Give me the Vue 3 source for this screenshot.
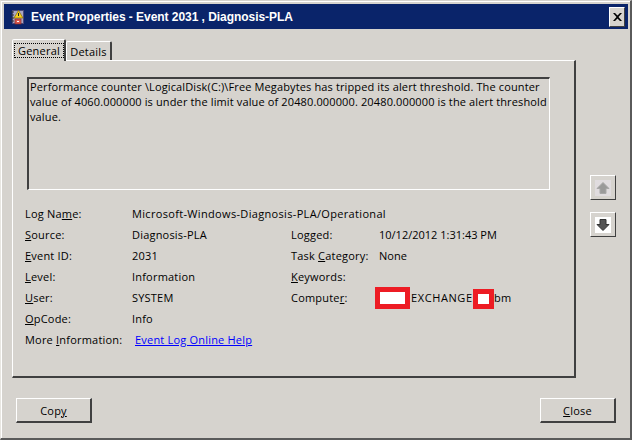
<script setup>
const rows = [
  { label: 'Source:', key: 0, value: 'Diagnosis-PLA', label2: 'Logged:', key2: 3, value2: '10/12/2012 1:31:43 PM' },
  { label: 'Event ID:', key: 0, value: '2031', label2: 'Task Category:', key2: 5, value2: 'None' },
  { label: 'Level:', key: 0, value: 'Information', label2: 'Keywords:', key2: 0, value2: '' },
]
const split = (text, i) => [text.slice(0, i), text[i], text.slice(i + 1)]
</script>

<template>
  <div class="page">
    <div class="window">
      <div class="titlebar">
        <svg class="appicon" width="16" height="16" viewBox="0 0 16 16">
          <rect x="2.500" y="1.500" width="11" height="13" fill="#a9a6c4" stroke="#4b4a7a" />
          <path d="M1 3h3M1 6h3M1 9h3M1 12h3" stroke="#333" />
          <path d="M8.500 1.500 13 9H4z" fill="#f5d020" stroke="#8a6d00" stroke-width=".7" />
          <rect x="8" y="4" width="1" height="3" fill="#222" />
          <rect x="5" y="10" width="6" height="5" fill="#d8584f" stroke="#8c2b25" stroke-width=".7" />
          <rect x="7" y="12" width="2" height="1" fill="#fff" />
        </svg>
        <span class="title">Event Properties - Event 2031 , Diagnosis-PLA</span>
        <button class="closex" aria-label="Close">
          <svg width="9" height="8" viewBox="0 0 9 8"><path d="M0 0h2l2.500 2.500L7 0h2L5.500 4 9 8H7L4.500 5.500 2 8H0l3.500-4z" fill="#000" /></svg>
        </button>
      </div>

      <div class="content">
        <div class="left">
          <div class="tabs">
            <div class="tab active"><span class="focus">General</span></div>
            <div class="tab">Details</div>
          </div>
          <div class="panel">
            <div class="message">Performance counter \LogicalDisk(C:)\Free Megabytes has tripped its alert threshold. The counter value of 4060.000000 is under the limit value of 20480.000000. 20480.000000 is the alert threshold value.</div>
            <div class="fields">
              <div class="row">
                <span class="c1">Log Na<u>m</u>e:</span>
                <span class="logname">Microsoft-Windows-Diagnosis-PLA/Operational</span>
              </div>
              <div v-for="r in rows" :key="r.label" class="row">
                <span class="c1">{{ split(r.label, r.key)[0] }}<u>{{ split(r.label, r.key)[1] }}</u>{{ split(r.label, r.key)[2] }}</span>
                <span class="c2">{{ r.value }}</span>
                <span class="c3">{{ split(r.label2, r.key2)[0] }}<u>{{ split(r.label2, r.key2)[1] }}</u>{{ split(r.label2, r.key2)[2] }}</span>
                <span class="c4">{{ r.value2 }}</span>
              </div>
              <div class="row">
                <span class="c1"><u>U</u>ser:</span>
                <span class="c2">SYSTEM</span>
                <span class="c3">Compute<u>r</u>:</span>
                <span class="computer">
                  <span class="redact wide"></span>
                  <span class="host">EXCHANGE</span>
                  <span class="redact narrow"></span>
                  <span class="tail">bm</span>
                </span>
              </div>
              <div class="row">
                <span class="c1"><u>O</u>pCode:</span>
                <span class="c2">Info</span>
              </div>
              <div class="row">
                <span class="more">More <u>I</u>nformation:</span>
                <a class="link" href="#">Event Log Online Help</a>
              </div>
            </div>
          </div>
        </div>
        <div class="arrows">
          <button class="arrow" aria-label="Previous">
            <span class="face dim">
              <svg width="16" height="16" viewBox="0 0 16 16"><path d="M8 2.500 14 8.500H11V13.500H5V8.500H2z" fill="#9a9a9a" stroke="#a8a8a8" /></svg>
            </span>
          </button>
          <button class="arrow" aria-label="Next">
            <span class="face">
              <svg width="16" height="16" viewBox="0 0 16 16"><path d="M5 2.500H11V7.500H14L8 13.500 2 7.500H5z" fill="#555" stroke="#333" /></svg>
            </span>
          </button>
        </div>
      </div>

      <div class="footer">
        <button class="btn">Cop<u>y</u></button>
        <button class="btn"><u>C</u>lose</button>
      </div>
    </div>
  </div>
</template>

<style>
html, body { margin: 0; background: #fff; }
</style>

<style scoped>
.page {
  width: 638px;
  height: 440px;
  background: #fff;
  font-family: "Open Sans", "Liberation Sans", Arial, sans-serif;
  font-size: 11px;
  letter-spacing: 0.2px;
  color: #000;
  overflow: hidden;
}
.window {
  box-sizing: border-box;
  width: 632px;
  height: 440px;
  background: #d6d3ce;
  border: 1px solid #e8e6e1;
  border-top-color: #d6d3ce;
  border-right: 2px solid #5a5a5a;
  border-bottom: 2px solid #5a5a5a;
  box-shadow: inset 1px 1px 0 #fff;
  padding: 3px 2px 0 3px;
  display: flex;
  flex-direction: column;
}
.titlebar {
  height: 25px;
  background: #0a246a;
  display: flex;
  align-items: center;
  padding: 0 3px 0 6px;
  flex: none;
}
.appicon { flex: none; }
.title {
  margin-left: 5px;
  color: #fff;
  font-weight: 700;
  font-family: "Liberation Sans", Arial, sans-serif;
  font-size: 12px;
  letter-spacing: -0.05px;
  flex: 1;
}
.closex {
  width: 16px;
  height: 20px;
  padding: 0;
  box-sizing: border-box;
  background: #d6d3ce;
  border: 1px solid;
  border-color: #fff #404040 #404040 #fff;
  display: flex;
  align-items: center;
  justify-content: center;
}
.content {
  display: flex;
  flex: none;
  padding: 11px 0 0 8px;
}
.left { width: 564px; flex: none; }
.tabs {
  display: flex;
  align-items: flex-end;
  height: 20px;
  padding-left: 1px;
}
.tab {
  box-sizing: border-box;
  width: 46px;
  height: 19px;
  border: 1px solid;
  border-color: #fff #404040 transparent #fff;
  border-width: 1px 2px 0 1px;
  border-radius: 2px 2px 0 0;
  display: flex;
  align-items: center;
  justify-content: center;
  padding-top: 1px;
}
.tab.active {
  width: 54px;
  height: 22px;
  margin-bottom: -1px;
  margin-left: -1px;
  padding: 3px 0 0 1px;
  align-items: flex-start;
  justify-content: flex-start;
  background: #d6d3ce;
  position: relative;
  z-index: 1;
}
.focus {
  box-sizing: border-box;
  width: 51px;
  height: 15px;
  border: 1px dotted #000;
  display: flex;
  align-items: center;
  justify-content: center;
}
.panel {
  box-sizing: border-box;
  height: 318px;
  border: 1px solid;
  border-color: #fff #404040 #404040 #fff;
  border-width: 1px 2px 2px 1px;
  padding: 16px 24px 0 14px;
}
.message {
  box-sizing: border-box;
  height: 113px;
  border: 1px solid;
  border-color: #404040 #fff #fff #404040;
  border-width: 2px 1px 1px 2px;
  padding: 0 1px;
  line-height: 15px;
  letter-spacing: 0.13px;
}
.fields {
  margin-top: 13px;
  margin-left: -2px;
}
.row {
  display: flex;
  align-items: center;
  height: 21px;
}
.c1 { width: 107px; flex: none; }
.c2 { width: 159px; flex: none; }
.c3 { width: 88px; flex: none; }
.c4 { letter-spacing: 0; }
.logname { letter-spacing: 0.33px; }
.more { width: 110px; flex: none; }
.link { color: #00f; text-decoration: underline; }
.computer { display: flex; align-items: center; }
.redact {
  box-sizing: border-box;
  background: #fff;
  border: 5px solid #ed1c24;
  flex: none;
}
.wide { width: 35px; height: 22px; margin-left: -4px; }
.narrow { width: 21px; height: 20px; margin-top: 2px; }
.host { margin-left: 1px; width: 62px; overflow: hidden; white-space: nowrap; letter-spacing: 0.6px; }
.arrows {
  display: flex;
  flex-direction: column;
  gap: 12px;
  margin: 117px 0 0 14px;
  padding-top: 18px;
}
.arrow {
  box-sizing: border-box;
  width: 26px;
  height: 25px;
  padding: 0;
  background: #d6d3ce;
  border: 1px solid;
  border-color: #fff #404040 #404040 #fff;
  display: flex;
  align-items: center;
  justify-content: center;
}
.face {
  width: 16px;
  height: 16px;
  background: #fff;
  display: flex;
}
.face.dim { background: #e0dcdf; }
.footer {
  display: flex;
  justify-content: space-between;
  padding: 20px 12px 0 12px;
}
.btn {
  box-sizing: border-box;
  width: 76px;
  height: 25px;
  padding: 0;
  background: #d6d3ce;
  border: 1px solid;
  border-color: #fff #404040 #404040 #fff;
  border-width: 1px 2px 2px 1px;
  font: inherit;
  letter-spacing: 0.2px;
  color: #000;
}
</style>
